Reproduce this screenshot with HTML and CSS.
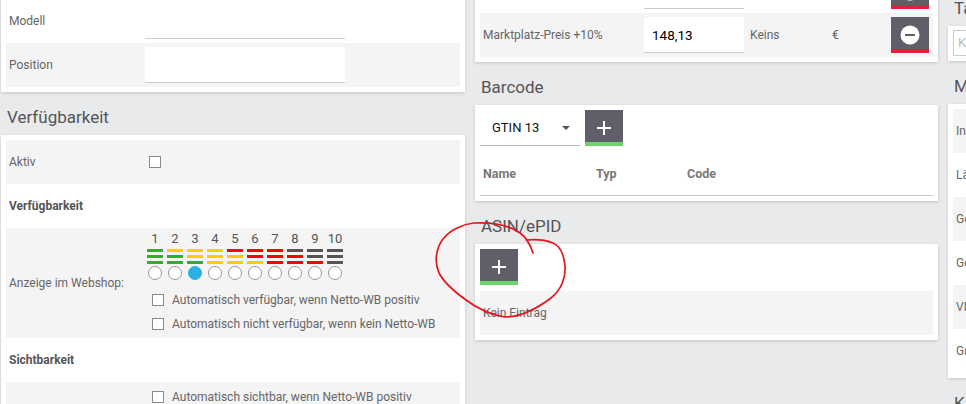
FILE: index.html
```html
<html>
  <head>
    <title>Artikel bearbeiten</title>
    <link rel="stylesheet" href="styles.css">
  </head>
  <body>
    <div class="page">
      <div class="col col-left">
        <div class="card">
          <div class="row">
            <span class="label">Modell</span>
            <input class="text-input" type="text">
          </div>
          <div class="row alt">
            <span class="label">Position</span>
            <input class="text-input" type="text">
          </div>
        </div>

        <h2 class="section-title">Verfügbarkeit</h2>
        <div class="card">
          <div class="row alt">
            <span class="label">Aktiv</span>
            <span class="box box-single"></span>
          </div>
          <div class="row">
            <span class="label strong">Verfügbarkeit</span>
          </div>
          <div class="row alt">
            <span class="label">Anzeige im Webshop:</span>
            <div class="avail">
              <div class="scale">
                <div class="step"><span class="step-num">1</span><span class="bar green"></span><span class="bar green"></span><span class="bar green"></span><span class="radio"></span></div>
                <div class="step"><span class="step-num">2</span><span class="bar yellow"></span><span class="bar green"></span><span class="bar green"></span><span class="radio"></span></div>
                <div class="step"><span class="step-num">3</span><span class="bar yellow"></span><span class="bar yellow"></span><span class="bar green"></span><span class="radio checked"></span></div>
                <div class="step"><span class="step-num">4</span><span class="bar yellow"></span><span class="bar yellow"></span><span class="bar yellow"></span><span class="radio"></span></div>
                <div class="step"><span class="step-num">5</span><span class="bar red"></span><span class="bar yellow"></span><span class="bar yellow"></span><span class="radio"></span></div>
                <div class="step"><span class="step-num">6</span><span class="bar red"></span><span class="bar red"></span><span class="bar yellow"></span><span class="radio"></span></div>
                <div class="step"><span class="step-num">7</span><span class="bar red"></span><span class="bar red"></span><span class="bar red"></span><span class="radio"></span></div>
                <div class="step"><span class="step-num">8</span><span class="bar dark"></span><span class="bar red"></span><span class="bar red"></span><span class="radio"></span></div>
                <div class="step"><span class="step-num">9</span><span class="bar dark"></span><span class="bar dark"></span><span class="bar red"></span><span class="radio"></span></div>
                <div class="step"><span class="step-num">10</span><span class="bar dark"></span><span class="bar dark"></span><span class="bar dark"></span><span class="radio"></span></div>
              </div>
              <div class="checks">
                <div class="check"><span class="box"></span>Automatisch verfügbar, wenn Netto-WB positiv</div>
                <div class="check"><span class="box"></span>Automatisch nicht verfügbar, wenn kein Netto-WB</div>
              </div>
            </div>
          </div>
          <div class="row">
            <span class="label strong">Sichtbarkeit</span>
          </div>
          <div class="row alt">
            <span class="label"></span>
            <div class="checks checks-top">
              <div class="check"><span class="box"></span>Automatisch sichtbar, wenn Netto-WB positiv</div>
            </div>
          </div>
        </div>
      </div>

      <div class="col col-mid">
        <div class="card">
          <div class="row">
            <span class="label wide"></span>
            <input class="text-input short" type="text">
            <span class="unit"></span>
            <span class="currency"></span>
            <button class="btn btn-remove">
              <svg width="20" height="20" viewBox="0 0 20 20"><circle cx="10" cy="10" r="9.5" fill="#fff"/><rect x="5" y="9" width="10" height="2" fill="#5e5f69"/></svg>
            </button>
          </div>
          <div class="row alt">
            <span class="label wide">Marktplatz-Preis +10%</span>
            <input class="text-input short" type="text" value="148,13">
            <span class="unit">Keins</span>
            <span class="currency">€</span>
            <button class="btn btn-remove">
              <svg width="20" height="20" viewBox="0 0 20 20"><circle cx="10" cy="10" r="9.5" fill="#fff"/><rect x="5" y="9" width="10" height="2" fill="#5e5f69"/></svg>
            </button>
          </div>
        </div>

        <h2 class="section-title">Barcode</h2>
        <div class="card">
          <div class="toolbar">
            <div class="select"><span>GTIN 13</span><span class="caret"></span></div>
            <button class="btn btn-add">
              <svg width="14" height="14" viewBox="0 0 14 14"><path d="M7 0v14M0 7h14" stroke="#fff" stroke-width="2"/></svg>
            </button>
          </div>
          <div class="table-head">
            <span class="th th-name">Name</span>
            <span class="th th-typ">Typ</span>
            <span class="th">Code</span>
          </div>
        </div>

        <h2 class="section-title">ASIN/ePID</h2>
        <div class="card">
          <button class="btn btn-add">
            <svg width="14" height="14" viewBox="0 0 14 14"><path d="M7 0v14M0 7h14" stroke="#fff" stroke-width="2"/></svg>
          </button>
          <div class="row alt empty">Kein Eintrag</div>
        </div>
      </div>

      <div class="col col-right">
        <h2 class="section-title">Tags</h2>
        <div class="card card-tags">
          <div class="tag-input">Keyword hinzufügen</div>
        </div>
        <h2 class="section-title">Maße</h2>
        <div class="card">
          <div class="row alt"><span class="label">Inhalt</span></div>
          <div class="row"><span class="label">Länge</span></div>
          <div class="row alt"><span class="label">Gewicht</span></div>
          <div class="row"><span class="label">Gewicht netto</span></div>
          <div class="row alt"><span class="label">VPE</span></div>
          <div class="row"><span class="label">Grundpreis</span></div>
        </div>
        <h2 class="section-title">Kategorien</h2>
      </div>
    </div>

    <svg class="annotation" width="966" height="404" viewBox="0 0 966 404">
      <path d="M533,253 C530,244 526,237 520,233 C510,226 493,222 474,223 C463,224 450,230 443,239 C436,248 434,262 439,273 C444,283 455,292 466,300 C478,309 492,315 505,317 C521,317 539,307 551,298 C561,290 566,278 565,266 C564,255 560,246 553,243 C546,240 536,239 526,240" fill="none" stroke="#e8141c" stroke-width="1.7" stroke-linecap="round"/>
    </svg>
  </body>
</html>
```

FILE: styles.css
```css
body {
  margin: 0;
  background: #e9eaec;
  font-family: Roboto, "Liberation Sans", sans-serif;
  font-size: 12px;
  color: #666;
  overflow: hidden;
}

.page {
  display: flex;
  align-items: flex-start;
  gap: 10px;
  padding-left: 1px;
  height: 404px;
}

.col {
  flex: none;
}
.col-left {
  width: 464px;
  margin-top: -6px;
}
.col-mid {
  width: 463px;
  margin-top: -36px;
}
.col-right {
  width: 300px;
  margin-top: -17px;
}

.card {
  background: #fff;
  padding: 5px;
  box-shadow: 0 1px 3px rgba(0, 0, 0, 0.16);
}

.section-title {
  margin: 0;
  padding: 15px 6px 8px;
  font-size: 17px;
  line-height: 20px;
  font-weight: 400;
  color: #555;
}

.row {
  display: flex;
  align-items: center;
  min-height: 44px;
  padding: 0 3px;
  box-sizing: border-box;
}
.row.alt {
  background: #f4f4f4;
}

.label {
  width: 136px;
  flex: none;
  white-space: nowrap;
}
.label.strong {
  font-weight: 700;
  color: #555;
}
.label.wide {
  width: 161px;
}

.text-input {
  width: 200px;
  height: 36px;
  border: 0;
  border-bottom: 1px solid #ccc;
  background: #fff;
  box-sizing: border-box;
  font-family: Roboto, "Liberation Sans", sans-serif;
  outline: none;
}
.text-input.short {
  width: 100px;
  padding-left: 8px;
  font-size: 13.5px;
  color: #000;
}

.box {
  width: 12px;
  height: 12px;
  border: 1px solid #8a8a8a;
  background: #fff;
  box-sizing: border-box;
  flex: none;
}
.box-single {
  margin-left: 4px;
}

/* Verfügbarkeits-Skala */
.avail {
  align-self: flex-start;
  padding-top: 4px;
  padding-bottom: 2px;
}
.scale {
  display: flex;
}
.step {
  width: 20px;
  display: flex;
  flex-direction: column;
  align-items: center;
}
.step-num {
  font-size: 13px;
  line-height: 14px;
  color: #555;
  margin-bottom: 3px;
}
.bar {
  width: 16px;
  height: 3px;
  margin-bottom: 3px;
}
.bar.green { background: #38ab2f; }
.bar.yellow { background: #ffcc00; }
.bar.red { background: #ff0000; }
.bar.dark { background: #555; }
.radio {
  width: 14px;
  height: 14px;
  margin-top: -1px;
  border: 1px solid #999;
  border-radius: 50%;
  background: #fff;
  box-sizing: border-box;
}
.radio.checked {
  background: #29b1e4;
  border-color: #29b1e4;
}

.checks {
  margin-top: 8px;
}
.checks-top {
  align-self: flex-start;
  margin-top: 3px;
}
.check {
  display: flex;
  align-items: center;
  height: 24px;
  padding-left: 7px;
  white-space: nowrap;
}
.check .box {
  margin-right: 8px;
}

/* Preise */
.unit {
  width: 82px;
  margin-left: 6px;
}
.currency {
  flex: 1;
}

.btn {
  width: 38px;
  height: 36px;
  padding: 0;
  border: 0;
  border-bottom: 4px solid;
  background: #5e5f69;
  box-sizing: border-box;
  display: flex;
  align-items: center;
  justify-content: center;
  flex: none;
}
.btn svg {
  margin-top: 4px;
}
.btn-remove {
  border-bottom-color: #ec1b3c;
  margin-right: 1px;
}
.btn-add {
  border-bottom-color: #6dd36c;
}

/* Barcode */
.toolbar {
  display: flex;
  gap: 5px;
}
.select {
  width: 100px;
  height: 36px;
  padding: 0 10px 0 12px;
  border-bottom: 1px solid #bbb;
  box-sizing: border-box;
  display: flex;
  align-items: center;
  justify-content: space-between;
  font-size: 13px;
  color: #111;
}
.caret {
  width: 0;
  height: 0;
  border-left: 4px solid transparent;
  border-right: 4px solid transparent;
  border-top: 4px solid #555;
}
.table-head {
  display: flex;
  padding: 19px 3px 12px;
  line-height: 18px;
  border-bottom: 1px solid #ccc;
  font-weight: 700;
  font-size: 12.5px;
  color: #777;
}
.th-name {
  width: 113px;
}
.th-typ {
  width: 91px;
}

.empty {
  margin-top: 6px;
}

/* rechte Spalte */
.card-tags {
  padding: 4px 5px 5px;
}
.tag-input {
  height: 26px;
  line-height: 24px;
  padding-left: 4px;
  border: 1px solid #ccc;
  box-sizing: border-box;
  font-size: 13px;
  color: #bbb;
  white-space: nowrap;
}

.annotation {
  position: absolute;
  top: 0;
  left: 0;
  pointer-events: none;
}
```
